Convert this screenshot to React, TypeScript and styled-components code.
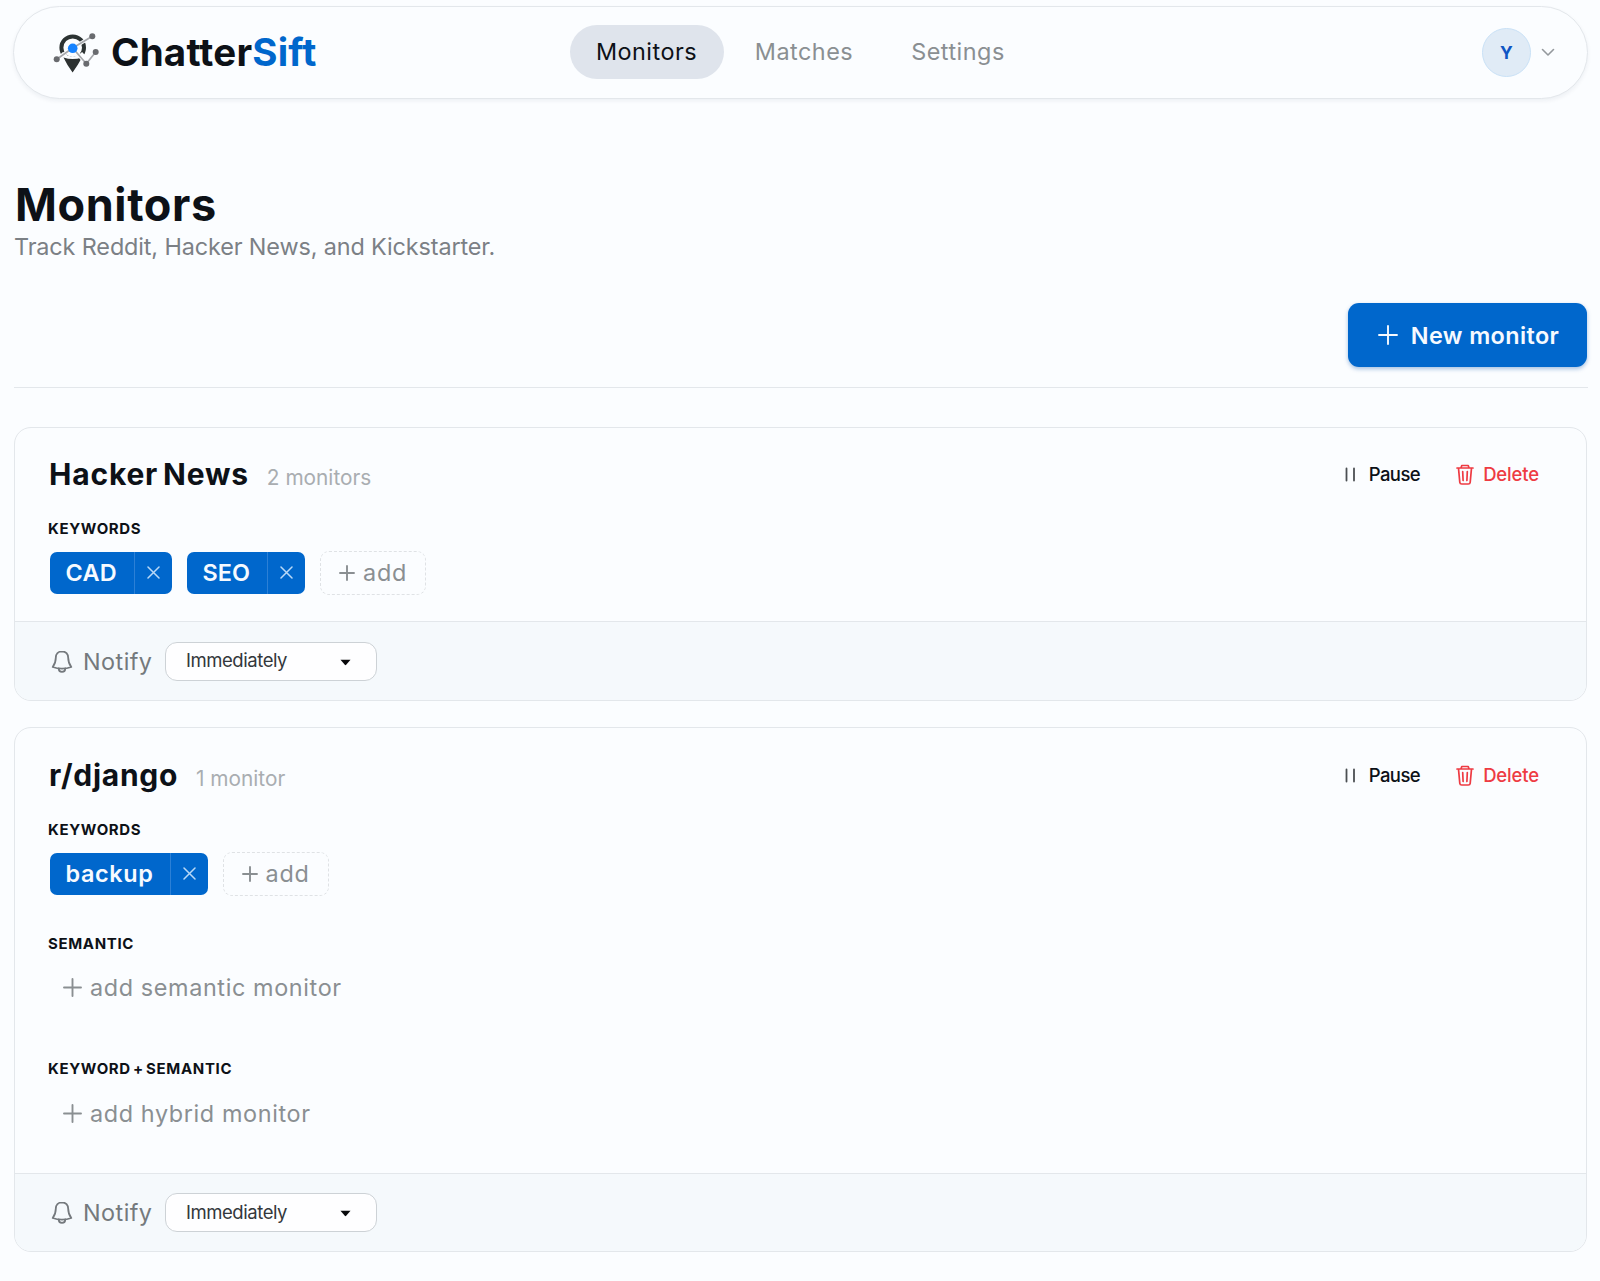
import React from "react";
import styled, { createGlobalStyle } from "styled-components";

const color = {
  page: "#fbfdff",
  ink: "#0d1117",
  muted: "#8a8f92",
  line: "#e3e7eb",
  blue: "#0067cc",
  red: "#ee3b43",
};

const GlobalStyle = createGlobalStyle`
  * { box-sizing: border-box; }
  body {
    margin: 0;
    background: ${color.page};
    color: ${color.ink};
    font-family: Inter, "Open Sans", sans-serif;
  }
  button { font: inherit; color: inherit; background: none; border: 0; padding: 0; margin: 0; }
  h1, h2, h3, p { margin: 0; }
`;

const Page = styled.div`
  min-height: 1281px;
  padding: 6px 12px 28px 13px;
  white-space: nowrap;
`;

const Header = styled.header`
  display: grid;
  grid-template-columns: 1fr auto 1fr;
  align-items: center;
  height: 93px;
  padding: 0 32px 0 39px;
  border: 1px solid ${color.line};
  border-radius: 47px;
  background: #fbfdff;
  box-shadow: 0 2px 4px rgba(20, 40, 60, 0.06);
`;

const Brand = styled.div`
  display: flex;
  align-items: center;
  gap: 12px;
  margin-bottom: 2px;
  svg { flex: none; margin-top: 1px; }
`;

const Wordmark = styled.span`
  font-size: 38.5px;
  line-height: 44px;
  font-weight: 700;
  letter-spacing: 0.2px;
  span { color: ${color.blue}; }
`;

const Nav = styled.nav`
  display: flex;
  gap: 5px;
  margin: 0 7px 2px 0;
`;

const NavItem = styled.a<{ $active?: boolean; $width: number }>`
  display: flex;
  align-items: center;
  justify-content: center;
  width: ${(p) => p.$width}px;
  height: 54px;
  border-radius: 27px;
  font-size: 23.4px;
  letter-spacing: 0.5px;
  color: ${(p) => (p.$active ? color.ink : color.muted)};
  background: ${(p) => (p.$active ? "#dfe4ec" : "transparent")};
`;

const Account = styled.div`
  display: flex;
  align-items: center;
  justify-content: flex-end;
  gap: 10px;
  margin-bottom: 1px;
`;

const Avatar = styled.span`
  display: grid;
  place-items: center;
  width: 49px;
  height: 49px;
  border: 1px solid #c9e1f6;
  border-radius: 50%;
  background: #e0ebf6;
  color: #0f55c4;
  font-size: 17.5px;
  font-weight: 700;
`;

const Main = styled.main`
  padding: 81px 0 0 1px;
`;

const Title = styled.h1`
  padding-left: 1px;
  font-size: 45px;
  line-height: 49px;
  margin-bottom: 1px;
  font-weight: 700;
  letter-spacing: 0.6px;
`;

const Subtitle = styled.p`
  font-size: 23.4px;
  line-height: 34px;
  letter-spacing: -0.12px;
  color: #7b8085;
`;

const Toolbar = styled.div`
  display: flex;
  justify-content: flex-end;
  margin-top: 39px;
  padding: 0 1px 20px 0;
  border-bottom: 1px solid ${color.line};
`;

const PrimaryButton = styled.button`
  display: flex;
  align-items: center;
  justify-content: center;
  gap: 13px;
  width: 239px;
  height: 64px;
  padding-left: 2px;
  border-radius: 11px;
  background: ${color.blue};
  color: #f6faff;
  font-size: 23.4px;
  font-weight: 600;
  letter-spacing: 0.4px;
  box-shadow: 0 2px 4px rgba(0, 80, 170, 0.35);
`;

const Card = styled.section<{ $gap: number }>`
  margin: ${(p) => p.$gap}px 1px 0 0;
  border: 1px solid ${color.line};
  border-radius: 17px;
  overflow: hidden;
  background: #fbfdff;
`;

const CardBody = styled.div<{ $top: number; $bottom: number }>`
  padding: ${(p) => p.$top}px 47px ${(p) => p.$bottom}px 33px;
`;

const CardHead = styled.div`
  display: flex;
  align-items: center;
  justify-content: space-between;
  height: 42px;
`;

const CardTitle = styled.div`
  display: flex;
  align-items: baseline;
  gap: 18px;
  padding-left: 1px;
`;

const Name = styled.h2<{ $track: number }>`
  font-size: 30px;
  line-height: 42px;
  font-weight: 700;
  letter-spacing: ${(p) => p.$track}px;
  word-spacing: -3px;
`;

const Count = styled.span`
  font-size: 20.8px;
  color: #a9adb1;
`;

const Actions = styled.div`
  display: flex;
  align-items: center;
  gap: 36px;
  margin-bottom: 1px;
`;

const Action = styled.button<{ $danger?: boolean }>`
  display: flex;
  align-items: center;
  gap: ${(p) => (p.$danger ? 9 : 13)}px;
  font-size: 18.5px;
  font-weight: 500;
  letter-spacing: ${(p) => (p.$danger ? -0.15 : -0.55)}px;
  color: ${(p) => (p.$danger ? color.red : color.ink)};
  svg { margin-top: 1px; }
`;

const Label = styled.h3<{ $top: number }>`
  margin-top: ${(p) => p.$top}px;
  font-size: 15px;
  line-height: 22px;
  font-weight: 700;
  letter-spacing: 0.65px;
  word-spacing: -2px;
`;

const Chips = styled.div`
  display: flex;
  align-items: center;
  gap: 15px;
  height: 43px;
  margin-top: 11px;
  padding-left: 2px;
`;

const Chip = styled.div<{ $width: number }>`
  display: flex;
  width: ${(p) => p.$width}px;
  height: 42px;
  border-radius: 7px;
  background: ${color.blue};
  color: #f6faff;
  font-size: 23.4px;
  line-height: 42px;
  font-weight: 600;
`;

const ChipText = styled.span<{ $track: number }>`
  flex: 1;
  padding-left: 15.5px;
  letter-spacing: ${(p) => p.$track}px;
`;

const ChipRemove = styled.button`
  display: grid;
  place-items: center;
  width: 38px;
  border-left: 1px solid #2c80d6;
  color: #b9d9f7;
`;

const AddChip = styled.button`
  display: flex;
  align-items: center;
  justify-content: center;
  gap: 8px;
  width: 106px;
  height: 44px;
  border: 1px dashed #dfe2e5;
  border-radius: 9px;
  font-size: 23.4px;
  letter-spacing: 0.7px;
  color: ${color.muted};
`;

const AddLine = styled.button`
  display: flex;
  align-items: center;
  gap: 8px;
  height: 44px;
  margin-top: 11px;
  padding-left: 15px;
  font-size: 23.4px;
  letter-spacing: 0.62px;
  color: ${color.muted};
`;

const CardFoot = styled.footer<{ $height: number }>`
  display: flex;
  align-items: center;
  height: ${(p) => p.$height}px;
  padding-left: 36px;
  border-top: 1px solid ${color.line};
  background: #f5f9fc;
`;

const Notify = styled.span`
  width: 82px;
  margin-left: 10px;
  font-size: 23.4px;
  letter-spacing: 0.45px;
  color: #74797d;
`;

const Select = styled.button`
  display: flex;
  align-items: center;
  justify-content: space-between;
  width: 212px;
  height: 39px;
  padding: 0 25px 2px 20px;
  border: 1px solid #cdd2d6;
  border-radius: 12px;
  background: #fefeff;
  color: #33373b;
  font-size: 18.5px;
  letter-spacing: -0.45px;
  svg { margin-top: 4px; }
`;

const LogoMark = () => (
  <svg width="46" height="41" viewBox="0 0 46 41">
    <circle cx="19.7" cy="15.700" r="11.3" fill="#fbfdff" stroke="#2c3333" strokeWidth="4" />
    <path d="M8 22Q19.700 33 31 22" fill="none" stroke="#fbfdff" strokeWidth="5.5" />
    <path d="M10.500 25.500Q19.500 28.500 29 25.500Q25 33 19.600 40.500Q14 33 10.500 25.500Z" fill="#2c3131" />
    <path d="M3.700 27.300L19.700 16L39.300 4.300M19.700 16L33.300 31.700L42.700 20" fill="none" stroke="#fbfdff" strokeWidth="3.5" />
    <path d="M3.700 27.300L19.700 16L39.300 4.300M19.700 16L33.300 31.700L42.700 20" fill="none" stroke="#a5a7ab" strokeWidth="1.7" />
    <g fill="#696b6f">
      <circle cx="3.7" cy="27.3" r="3" />
      <circle cx="39.3" cy="4.3" r="3" />
      <circle cx="33.3" cy="31.7" r="3" />
      <circle cx="42.7" cy="20" r="3" />
    </g>
    <circle cx="19.7" cy="16.3" r="4.8" fill="#1683ff" />
  </svg>
);

const Plus = ({ size, weight = 1.9 }: { size: number; weight?: number }) => (
  <svg width={size} height={size} viewBox={`0 0 ${size} ${size}`} stroke="currentColor" strokeWidth={weight} strokeLinecap="round">
    <path d={`M${size / 2} 1V${size - 1}M1 ${size / 2}H${size - 1}`} />
  </svg>
);

const Cross = () => (
  <svg width="13" height="13" viewBox="0 0 13 13" stroke="currentColor" strokeWidth="1.5" strokeLinecap="round">
    <path d="M1 1l11 11M12 1L1 12" />
  </svg>
);

const ChevronDown = () => (
  <svg width="14" height="9" viewBox="0 0 14 9" fill="none" stroke="#94999d" strokeWidth="1.6" strokeLinecap="round" strokeLinejoin="round">
    <path d="M1.5 1.5L7 7l5.5-5.5" />
  </svg>
);

const PauseBars = () => (
  <svg width="11" height="16" viewBox="0 0 11 16" stroke="#4b4f53" strokeWidth="1.8" strokeLinecap="round">
    <path d="M1.5 2.5v12M9 2.5v12" />
  </svg>
);

const Trash = () => (
  <svg width="18" height="21" viewBox="0 0 18 21" fill="none" stroke="currentColor" strokeWidth="1.7" strokeLinecap="round" strokeLinejoin="round">
    <path d="M1 4H17M5 3.8L5.8 1.5H12.2L13 3.8M2.5 4.2L3.8 18.3Q4 20 5.7 20H12.3Q14 20 14.2 18.3L15.5 4.2M6.7 7.5L7.1 16.5M11.3 7.5L10.9 16.5" />
  </svg>
);

const Bell = () => (
  <svg width="22" height="23" viewBox="0 0 22 23" fill="none" stroke="#74797d" strokeWidth="1.8" strokeLinejoin="round" strokeLinecap="round">
    <path d="M11 1.3C7.2 1.3 4.8 4.2 4.8 7.7C4.8 11.5 3.6 14.5 1.7 17Q6 18.6 11 18.6T20.3 17C18.4 14.5 17.2 11.5 17.2 7.7C17.2 4.2 14.8 1.3 11 1.3Z" />
    <path d="M7.7 18.5C7.7 22.9 14.3 22.9 14.3 18.5" />
  </svg>
);

const Caret = () => (
  <svg width="11" height="7" viewBox="0 0 11 7">
    <path d="M.5.8h10L6.2 5.8q-.7.7-1.4 0z" fill="#08090b" />
  </svg>
);

type Keyword = { text: string; width: number; track: number };

const KeywordRow = ({ items }: { items: Keyword[] }) => (
  <Chips>
    {items.map((k) => (
      <Chip key={k.text} $width={k.width}>
        <ChipText $track={k.track}>{k.text}</ChipText>
        <ChipRemove><Cross /></ChipRemove>
      </Chip>
    ))}
    <AddChip><Plus size={16} />add</AddChip>
  </Chips>
);

type MonitorProps = {
  name: string;
  track: number;
  count: string;
  gap: number;
  top: number;
  bottom: number;
  foot: number;
  keywords: Keyword[];
  children?: React.ReactNode;
};

const MonitorCard = ({ name, track, count, gap, top, bottom, foot, keywords, children }: MonitorProps) => (
  <Card $gap={gap}>
    <CardBody $top={top} $bottom={bottom}>
      <CardHead>
        <CardTitle>
          <Name $track={track}>{name}</Name>
          <Count>{count}</Count>
        </CardTitle>
        <Actions>
          <Action><PauseBars />Pause</Action>
          <Action $danger><Trash />Delete</Action>
        </Actions>
      </CardHead>
      <Label $top={23}>KEYWORDS</Label>
      <KeywordRow items={keywords} />
      {children}
    </CardBody>
    <CardFoot $height={foot}>
      <Bell />
      <Notify>Notify</Notify>
      <Select>Immediately<Caret /></Select>
    </CardFoot>
  </Card>
);

export default function App() {
  return (
    <>
      <GlobalStyle />
      <Page>
        <Header>
          <Brand>
            <LogoMark />
            <Wordmark>Chatter<span>Sift</span></Wordmark>
          </Brand>
          <Nav>
            <NavItem $active $width={154}>Monitors</NavItem>
            <NavItem $width={151}>Matches</NavItem>
            <NavItem $width={147}>Settings</NavItem>
          </Nav>
          <Account>
            <Avatar>Y</Avatar>
            <ChevronDown />
          </Account>
        </Header>
        <Main>
          <Title>Monitors</Title>
          <Subtitle>Track Reddit, Hacker News, and Kickstarter.</Subtitle>
          <Toolbar>
            <PrimaryButton><Plus size={20} />New monitor</PrimaryButton>
          </Toolbar>
          <MonitorCard
            name="Hacker News"
            track={0.8}
            count="2 monitors"
            gap={39}
            top={25}
            bottom={27}
            foot={79}
            keywords={[
              { text: "CAD", width: 122, track: 0.3 },
              { text: "SEO", width: 118, track: 0 },
            ]}
          />
          <MonitorCard
            name="r/django"
            track={0.7}
            count="1 monitor"
            gap={26}
            top={26}
            bottom={38}
            foot={78}
            keywords={[{ text: "backup", width: 157.5, track: 0.65 }]}
          >
            <Label $top={37.5}>SEMANTIC</Label>
            <AddLine><Plus size={19} />add semantic monitor</AddLine>
            <Label $top={48.5}>KEYWORD + SEMANTIC</Label>
            <AddLine><Plus size={19} />add hybrid monitor</AddLine>
          </MonitorCard>
        </Main>
      </Page>
    </>
  );
}
